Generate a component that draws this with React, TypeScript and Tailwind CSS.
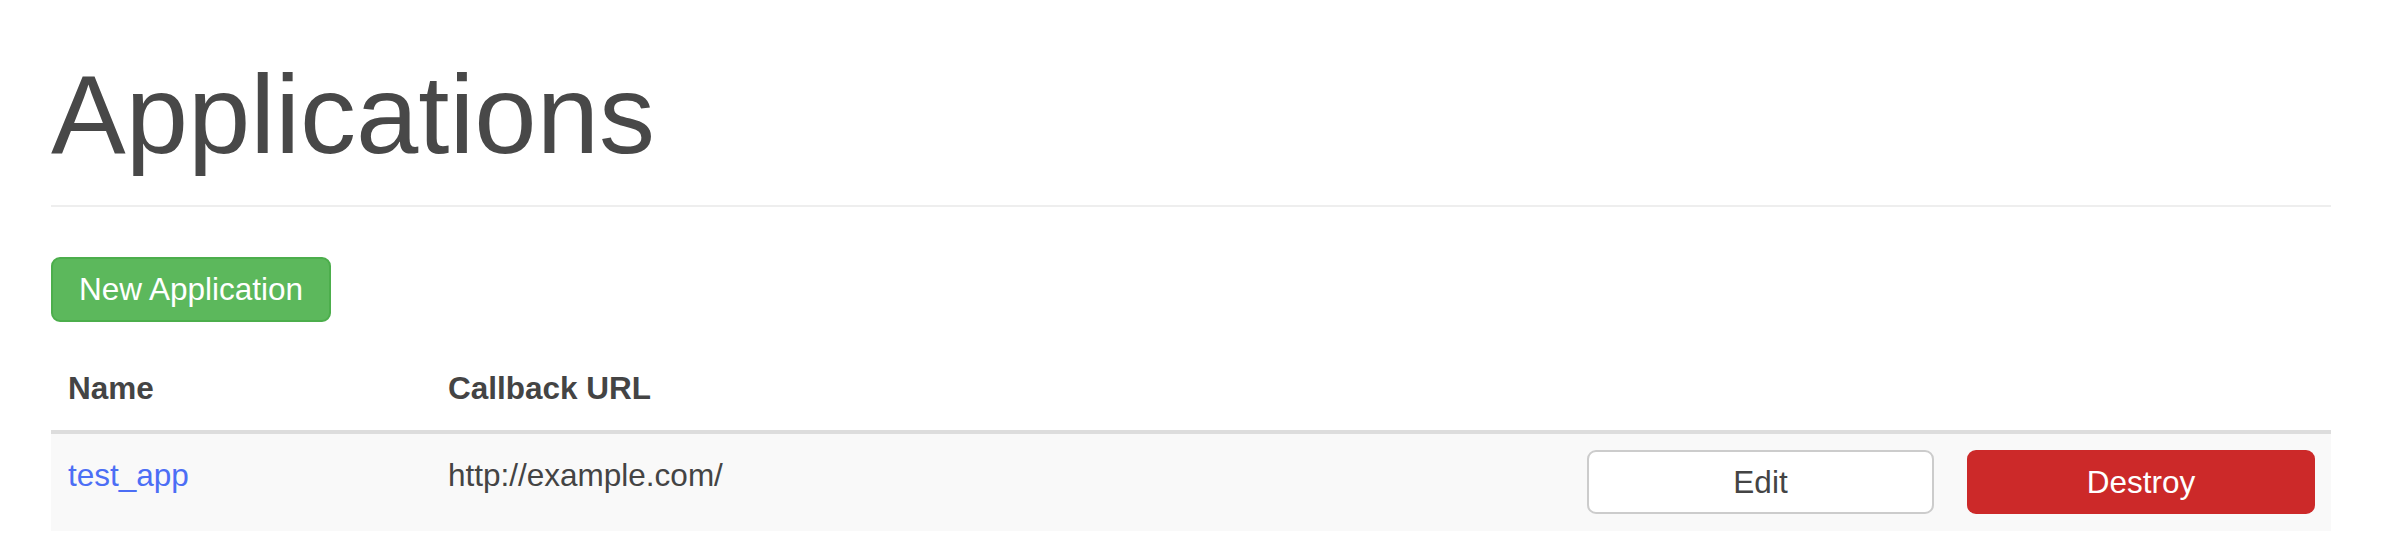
import React from "react";

export default function App() {
  return (
    <div
      className="w-[2393px] min-h-[553px] bg-white pl-[51px] pr-[62px] text-[#444444]"
      style={{ fontFamily: '"Liberation Sans", Arial, sans-serif' }}
    >
      <h1 className="pt-[59px] text-[112px] leading-[112px] font-normal text-[#484848]">
        Applications
      </h1>
      <div className="mt-[34px] h-[2px] bg-[#eeeeee]" />
      <div className="mt-[50px] flex">
        <button className="flex h-[65px] w-[280px] items-center justify-center rounded-[9px] border-2 border-[#4cae4c] bg-[#5cb85c] text-[31.5px] leading-[45px] text-white">
          New Application
        </button>
      </div>
      <div className="mt-[26px] text-[31.5px] leading-[45px]">
        <div className="flex border-b-4 border-[#dddddd]">
          <div className="w-[380px] pl-[17px] pt-[18px] pb-[19px] font-bold">Name</div>
          <div className="w-[1139px] pl-[17px] pt-[18px] pb-[19px] font-bold">Callback URL</div>
          <div className="w-[380px]" />
          <div className="w-[381px]" />
        </div>
        <div className="flex h-[97px] bg-[#f9f9f9]">
          <div className="w-[380px] pl-[17px] pt-[19px]">
            <a className="text-[#4c6ef5]" href="#">test_app</a>
          </div>
          <div className="w-[1139px] pl-[17px] pt-[19px]">http://example.com/</div>
          <div className="w-[380px] pl-[17px] pr-[16px] pt-[16px]">
            <button className="flex h-[64px] w-full items-center justify-center rounded-[9px] border-2 border-[#cccccc] bg-white text-[#444444]">
              Edit
            </button>
          </div>
          <div className="w-[381px] pl-[17px] pr-[16px] pt-[16px]">
            <button className="flex h-[64px] w-full items-center justify-center rounded-[9px] bg-[#cc2929] text-white">
              Destroy
            </button>
          </div>
        </div>
      </div>
    </div>
  );
}
